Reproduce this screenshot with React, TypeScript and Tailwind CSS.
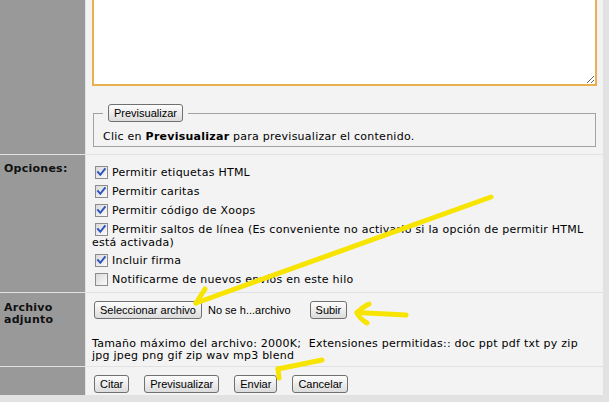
import React from "react";

const Btn = ({ children, className = "" }: { children: React.ReactNode; className?: string }) => (
  <button
    type="button"
    className={
      "h-[18px] px-[5px] border border-[#707070] rounded-[3px] bg-linear-to-b from-[#fdfdfd] to-[#dcdcdc] text-[11px] leading-none tracking-normal font-['Liberation_Sans',Arial,sans-serif] text-black shrink-0 " +
      className
    }
  >
    {children}
  </button>
);

const Check = ({ checked }: { checked: boolean }) => (
  <span className="inline-block align-top relative top-[-1px] w-[13px] h-[13px] ml-[3px] mr-[4px] border border-[#8b8c8c] bg-linear-to-br from-[#d9d9d9] to-[#fbfbfb]">
    {checked && (
      <svg className="absolute left-0 top-0" width="11" height="11" viewBox="0 0 11 11">
        <path d="M2 5.2 L4.3 7.8 L8.8 2.2" stroke="#2b54c0" strokeWidth="2" fill="none" strokeLinecap="square" />
      </svg>
    )}
  </span>
);

const options: { label: string; checked: boolean }[] = [
  { label: "Permitir etiquetas HTML", checked: true },
  { label: "Permitir caritas", checked: true },
  { label: "Permitir código de Xoops", checked: true },
  { label: "Permitir saltos de línea (Es conveniente no activarlo si la opción de permitir HTML está activada)", checked: true },
  { label: "Incluir firma", checked: true },
  { label: "Notificarme de nuevos envíos en este hilo", checked: false },
];

export default function App() {
  return (
    <div className="relative w-[609px] h-[402px] overflow-hidden bg-[#e2e2e2] font-['DejaVu_Sans',Verdana,sans-serif] text-[11px] tracking-[0.25px] text-black">
      <div className="w-[603px] flex flex-col gap-px">
        {/* Row 1: textarea + preview */}
        <div className="grid grid-cols-[85px_517px] gap-px h-[154px]">
          <div className="bg-[#999999]" />
          <div className="bg-[#f3f3f3] px-[6px]">
            <textarea className="block w-full h-[86px] border-2 border-t-0 border-[#e8b04e] bg-white outline-none" />
            <fieldset className="mt-[18px] mx-[1px] border border-[#a2a2a2] pl-[9px] pr-[9px] pt-[9px] pb-[3px]">
              <legend className="px-[5px]">
                <Btn>Previsualizar</Btn>
              </legend>
              <p className="leading-[12px]">
                Clic en <b>Previsualizar</b> para previsualizar el contenido.
              </p>
            </fieldset>
          </div>
        </div>

        {/* Row 2: Opciones */}
        <div className="grid grid-cols-[85px_517px] gap-px h-[137px]">
          <div className="bg-[#999999] pl-[4px] pt-[8px] font-bold leading-[12px] text-[#111]">Opciones:</div>
          <div className="bg-[#f3f3f3] pl-[6px] pr-[6px] pt-[9px]">
            {options.map((o) => (
              <div key={o.label} className="py-[3px] leading-[12px]">
                <Check checked={o.checked} />
                {o.label}
              </div>
            ))}
          </div>
        </div>

        {/* Row 3: Archivo adjunto */}
        <div className="grid grid-cols-[85px_517px] gap-px h-[73px]">
          <div className="bg-[#999999] pl-[4px] pt-[9px] font-bold leading-[12px] text-[#111]">
            Archivo
            <br />
            adjunto
          </div>
          <div className="bg-[#f3f3f3] pl-[6px] pr-[6px] pt-[8px]">
            <div className="flex items-center h-[18px]">
              <Btn className="ml-[2px]">Seleccionar archivo</Btn>
              <span className="ml-[6px] font-['Liberation_Sans',Arial,sans-serif] tracking-normal text-[11px]">No se h...archivo</span>
              <Btn className="ml-[19px]">Subir</Btn>
            </div>
            <p className="mt-[19px] leading-[12px]">
              Tamaño máximo del archivo: 2000K;&nbsp; Extensiones permitidas:: doc ppt pdf txt py zip
              <br />
              jpg jpeg png gif zip wav mp3 blend
            </p>
          </div>
        </div>

        {/* Row 4: buttons */}
        <div className="grid grid-cols-[85px_517px] gap-px h-[28px]">
          <div className="bg-[#999999]" />
          <div className="bg-[#f3f3f3] pl-[8px] pt-[8px] flex gap-[15px]">
            <Btn>Citar</Btn>
            <Btn>Previsualizar</Btn>
            <Btn>Enviar</Btn>
            <Btn>Cancelar</Btn>
          </div>
        </div>
      </div>

      {/* Yellow annotation arrows */}
      <svg className="absolute left-0 top-0 pointer-events-none" width="609" height="402" viewBox="0 0 609 402">
        <g stroke="#f7e400" strokeWidth="5" strokeLinecap="round" strokeLinejoin="round" fill="none">
          <path d="M491 197 L196 303" />
          <path d="M196 303 L205 289" />
          <path d="M406 315 L357 312.5" />
          <path d="M369 304 Q361 308 357 313 Q360 319 367 323" />
          <path d="M322 360 L278 369" />
          <path d="M278 369 L279 378" />
        </g>
      </svg>
    </div>
  );
}
